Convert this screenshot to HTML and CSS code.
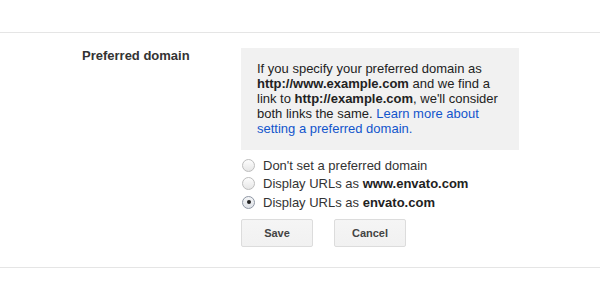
FILE: index.html
```html
<!DOCTYPE html>
<html>
<head>
<meta charset="utf-8">
<link rel="stylesheet" href="styles.css">
</head>
<body>
<div class="page">
  <section class="setting">
    <div class="label">Preferred domain</div>
    <div class="content">
      <div class="info">If you specify your preferred domain as <b>http://www.example.com</b> and we find a link to <b>http://example.com</b>, we'll consider both links the same. <a href="#" class="link">Learn more about setting a preferred domain.</a></div>
      <div class="options">
        <label class="option"><input type="radio" name="pd" class="radio"><span>Don't set a preferred domain</span></label>
        <label class="option"><input type="radio" name="pd" class="radio"><span>Display URLs as <b>www.envato.com</b></span></label>
        <label class="option"><input type="radio" name="pd" class="radio" checked><span>Display URLs as <b>envato.com</b></span></label>
      </div>
      <div class="actions">
        <button class="btn">Save</button>
        <button class="btn">Cancel</button>
      </div>
    </div>
  </section>
</div>
</body>
</html>
```
FILE: styles.css
```css
html, body {
  margin: 0;
  padding: 0;
  background: #fff;
}
body {
  font-family: "Liberation Sans", Arial, sans-serif;
  font-size: 13px;
  color: #222;
}
.page {
  padding-top: 32px;
}
.setting {
  display: flex;
  border-top: 1px solid #e5e5e5;
  border-bottom: 1px solid #e5e5e5;
  padding: 15px 0 20px 0;
}
.label {
  width: 159px;
  padding-left: 82px;
  box-sizing: content-box;
  font-weight: bold;
  color: #333;
  line-height: 15px;
}
.content {
  display: flex;
  flex-direction: column;
}
.info {
  width: 246px;
  background: #f1f1f1;
  padding: 13px 16px 14px 16px;
  line-height: 15px;
  color: #222;
}
.info b {
  color: #222;
}
.link {
  color: #15c;
  text-decoration: none;
}
.options {
  margin-top: 6px;
  display: flex;
  flex-direction: column;
}
.option {
  display: flex;
  align-items: center;
  height: 18.5px;
  color: #333;
}
.option b {
  color: #222;
}
.radio {
  appearance: none;
  -webkit-appearance: none;
  width: 13px;
  height: 13px;
  margin: 0 8px 0 1px;
  border: 1px solid #bdbdbd;
  border-radius: 50%;
  background: linear-gradient(#fdfdfd, #e6e6e6);
  box-sizing: border-box;
  display: grid;
  place-items: center;
}
.radio:checked {
  border-color: #8e96a3;
  background: linear-gradient(#f4f5f7, #dfe2e7);
}
.radio:checked::after {
  content: "";
  width: 4px;
  height: 4px;
  border-radius: 50%;
  background: #222;
}
.actions {
  display: flex;
  gap: 21px;
  margin-top: 7.5px;
}
.btn {
  width: 72px;
  height: 28px;
  box-sizing: border-box;
  border: 1px solid #dcdcdc;
  border-radius: 2px;
  background: linear-gradient(#f5f5f5, #f1f1f1);
  font-family: "Liberation Sans", Arial, sans-serif;
  font-size: 11px;
  font-weight: bold;
  color: #444;
  padding: 0;
}
```
